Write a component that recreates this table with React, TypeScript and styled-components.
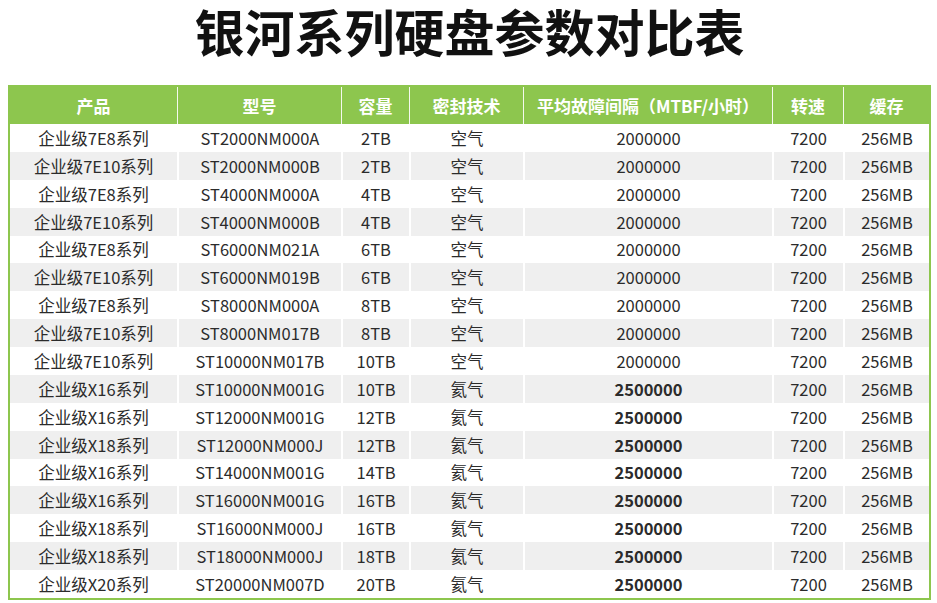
import React from "react";
import styled, { createGlobalStyle } from "styled-components";

const Global = createGlobalStyle`
  html, body { margin: 0; padding: 0; background: #fff; }
  body { font-family: "Noto Sans CJK SC", "Noto Sans", sans-serif; }
`;

const GREEN = "#8dc64e";

const Page = styled.div`
  width: 937px;
  height: 603px;
  display: flex;
  flex-direction: column;
  align-items: stretch;
  padding: 0 6px 0 8px;
  box-sizing: border-box;
  overflow: hidden;
`;

const Title = styled.h1`
  margin: 0;
  height: 85px;
  padding: 0;
  font-size: 50px;
  line-height: 60px;
  font-weight: 700;
  color: #111;
  text-align: center;
  letter-spacing: 0;
`;

const Table = styled.table`
  width: 923px;
  border-collapse: separate;
  border-spacing: 0;
  border: 2px solid ${GREEN};
  table-layout: fixed;
`;

const HeadCell = styled.th<{ $first?: boolean }>`
  background: ${GREEN};
  color: #fff;
  font-size: 17px;
  font-weight: 700;
  height: 37px;
  padding: 0;
  text-align: center;
  border-left: ${(p) => (p.$first ? "none" : "1.5px solid #f4f9ee")};
  white-space: nowrap;
`;

const Row = styled.tr<{ $alt: boolean }>`
  background: ${(p) => (p.$alt ? "#efefef" : "#fff")};
`;

const Cell = styled.td<{ $first?: boolean; $bold?: boolean }>`
  height: 27.88px;
  padding: 0;
  text-align: center;
  font-size: 16.5px;
  line-height: 20px;
  color: #2b2b2b;
  font-weight: ${(p) => (p.$bold ? 700 : 400)};
  border-left: ${(p) => (p.$first ? "none" : "2px solid #fff")};
  white-space: nowrap;
`;

const cols = [167, 164, 68, 114, 249, 71, 86];
const heads = ["产品", "型号", "容量", "密封技术", "平均故障间隔（MTBF/小时）", "转速", "缓存"];

type R = [string, string, string, string, string];
const rows: R[] = [
  ["企业级7E8系列", "ST2000NM000A", "2TB", "空气", "2000000"],
  ["企业级7E10系列", "ST2000NM000B", "2TB", "空气", "2000000"],
  ["企业级7E8系列", "ST4000NM000A", "4TB", "空气", "2000000"],
  ["企业级7E10系列", "ST4000NM000B", "4TB", "空气", "2000000"],
  ["企业级7E8系列", "ST6000NM021A", "6TB", "空气", "2000000"],
  ["企业级7E10系列", "ST6000NM019B", "6TB", "空气", "2000000"],
  ["企业级7E8系列", "ST8000NM000A", "8TB", "空气", "2000000"],
  ["企业级7E10系列", "ST8000NM017B", "8TB", "空气", "2000000"],
  ["企业级7E10系列", "ST10000NM017B", "10TB", "空气", "2000000"],
  ["企业级X16系列", "ST10000NM001G", "10TB", "氦气", "2500000"],
  ["企业级X16系列", "ST12000NM001G", "12TB", "氦气", "2500000"],
  ["企业级X18系列", "ST12000NM000J", "12TB", "氦气", "2500000"],
  ["企业级X16系列", "ST14000NM001G", "14TB", "氦气", "2500000"],
  ["企业级X16系列", "ST16000NM001G", "16TB", "氦气", "2500000"],
  ["企业级X18系列", "ST16000NM000J", "16TB", "氦气", "2500000"],
  ["企业级X18系列", "ST18000NM000J", "18TB", "氦气", "2500000"],
  ["企业级X20系列", "ST20000NM007D", "20TB", "氦气", "2500000"],
];

export default function App() {
  return (
    <>
      <Global />
      <Page>
        <Title>银河系列硬盘参数对比表</Title>
        <Table>
          <colgroup>
            {cols.map((w, i) => (
              <col key={i} style={{ width: w }} />
            ))}
          </colgroup>
          <thead>
            <tr>
              {heads.map((h, i) => (
                <HeadCell key={h} $first={i === 0}>
                  {h}
                </HeadCell>
              ))}
            </tr>
          </thead>
          <tbody>
            {rows.map((r, i) => (
              <Row key={i} $alt={i % 2 === 1}>
                <Cell $first>{r[0]}</Cell>
                <Cell>{r[1]}</Cell>
                <Cell>{r[2]}</Cell>
                <Cell>{r[3]}</Cell>
                <Cell $bold={r[4] === "2500000"}>{r[4]}</Cell>
                <Cell>7200</Cell>
                <Cell>256MB</Cell>
              </Row>
            ))}
          </tbody>
        </Table>
      </Page>
    </>
  );
}
